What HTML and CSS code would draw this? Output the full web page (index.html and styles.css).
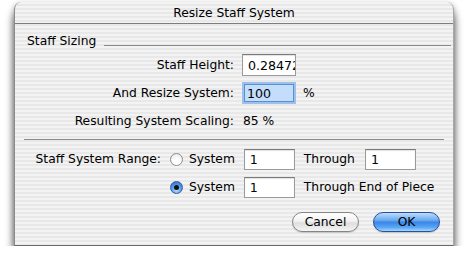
FILE: index.html
```html
<!DOCTYPE html>
<html lang="en">
<head>
    <meta charset="UTF-8">
    <title>Resize Staff System</title>
    <link rel="stylesheet" href="styles.css">
</head>
<body>
    <div class="window">
        <div class="titlebar">Resize Staff System</div>
        <div class="group-head">
            <span>Staff Sizing</span>
            <span class="rule"></span>
        </div>
        <div class="row">
            <label class="lbl lbl-wide">Staff Height:</label>
            <input class="field" type="text" value="0.28472">
        </div>
        <div class="row">
            <label class="lbl lbl-wide">And Resize System:</label>
            <input class="field focused" type="text" value="100">
            <span class="unit">%</span>
        </div>
        <div class="row">
            <label class="lbl lbl-wide">Resulting System Scaling:</label>
            <span class="value">85 %</span>
        </div>
        <div class="separator"></div>
        <div class="row">
            <label class="lbl lbl-narrow">Staff System Range:</label>
            <span class="radio"></span>
            <span class="opt">System</span>
            <input class="field short" type="text" value="1">
            <span class="opt through">Through</span>
            <input class="field short" type="text" value="1">
        </div>
        <div class="row">
            <span class="lbl lbl-narrow"></span>
            <span class="radio checked"></span>
            <span class="opt">System</span>
            <input class="field short" type="text" value="1">
            <span class="opt through">Through End of Piece</span>
        </div>
        <div class="buttons">
            <button class="btn">Cancel</button>
            <button class="btn default">OK</button>
        </div>
    </div>
</body>
</html>
```

FILE: styles.css
```css
body {
    margin: 0;
    background-color: #ffffff;
    font-family: 'DejaVu Sans', 'Liberation Sans', sans-serif;
    font-size: 12.3px;
    color: #000;
}
.window {
    margin: 2px 0 0 14px;
    width: 440px;
    height: 244px;
    box-sizing: border-box;
    border-left: 1px solid #8c8c8c;
    border-right: 1px solid #a8a8a8;
    border-bottom: 1px solid #6a6a6a;
    border-radius: 7px 7px 0 0;
    background: repeating-linear-gradient(#f3f3f3 0px, #f3f3f3 2px, #e8e8e8 2px, #e8e8e8 4px);
    box-shadow: 0 10px 10px rgba(0,0,0,0.6), 0 2px 6px rgba(0,0,0,0.3);
    overflow: hidden;
}
.titlebar {
    height: 21px;
    line-height: 22px;
    text-align: center;
    border-bottom: 1px solid #7d7d7d;
}
.group-head {
    display: flex;
    align-items: center;
    height: 16px;
    margin-top: 9px;
    padding-left: 12px;
}
.group-head .rule {
    flex: 1;
    height: 1px;
    background-color: #8a8a8a;
    margin: 8px 2px 0 8px;
}
.row {
    display: flex;
    align-items: center;
    height: 22px;
    margin-top: 6px;
}
.group-head + .row {
    margin-top: 5px;
}
.lbl {
    text-align: right;
    flex: none;
}
.lbl-wide {
    width: 219px;
    margin-right: 8px;
}
.lbl-narrow {
    width: 146px;
    margin-right: 9px;
}
.field {
    width: 54px;
    height: 22px;
    box-sizing: border-box;
    border: 1px solid #9a9a9a;
    border-top-color: #7a7a7a;
    background-color: #fff;
    padding: 0 0 0 5px;
    margin: 0;
    font-family: inherit;
    font-size: 12.6px;
    color: #000;
    outline: none;
    box-shadow: inset 0 1px 1px rgba(0,0,0,0.12);
}
.field.focused {
    width: 50px;
    height: 18px;
    margin-left: 2px;
    padding-left: 2px;
    border: 1px solid #5a8fd0;
    background-color: #c4ddfc;
    box-shadow: 0 0 0 2px #9dc1ec;
}
.field.short {
    width: 51px;
    height: 21px;
}
.unit {
    margin-left: 9px;
}
.value {
    margin-left: 1px;
}
.separator {
    height: 1px;
    background-color: #8a8a8a;
    margin: 7px 9px 0 9px;
}
.separator + .row {
    margin-top: 8px;
}
.radio {
    width: 13px;
    height: 13px;
    box-sizing: border-box;
    border-radius: 50%;
    border: 1px solid #8e8e8e;
    background: radial-gradient(circle at 50% 70%, #ffffff 30%, #e2e2e2 100%);
    margin-right: 6px;
    position: relative;
    flex: none;
}
.radio.checked {
    border-color: #2f5ea8;
    background: radial-gradient(circle at 50% 75%, #b9e0ff 0%, #5d9ee8 45%, #2764c4 100%);
}
.radio.checked::after {
    content: '';
    position: absolute;
    left: 3px;
    top: 3px;
    width: 5px;
    height: 5px;
    border-radius: 50%;
    background-color: #111;
}
.opt {
    margin-right: 9px;
}
.through {
    margin-left: 9px;
    margin-right: 10px;
}
.buttons {
    display: flex;
    justify-content: flex-end;
    gap: 14px;
    margin: 14px 13px 0 0;
}
.btn {
    width: 67px;
    height: 20px;
    box-sizing: border-box;
    border-radius: 10px;
    border: 1px solid #858585;
    padding: 0;
    font-family: inherit;
    font-size: 12.3px;
    color: #000;
    background: linear-gradient(#ffffff 0%, #f2f2f2 45%, #dedede 55%, #f4f4f4 100%);
    box-shadow: 0 1px 1px rgba(0,0,0,0.15);
}
.btn.default {
    border-color: #28509c;
    background: linear-gradient(#bcdcfb 0%, #6aaaf0 40%, #3b86e6 52%, #5aa6f6 80%, #a6d8ff 100%);
}
```
